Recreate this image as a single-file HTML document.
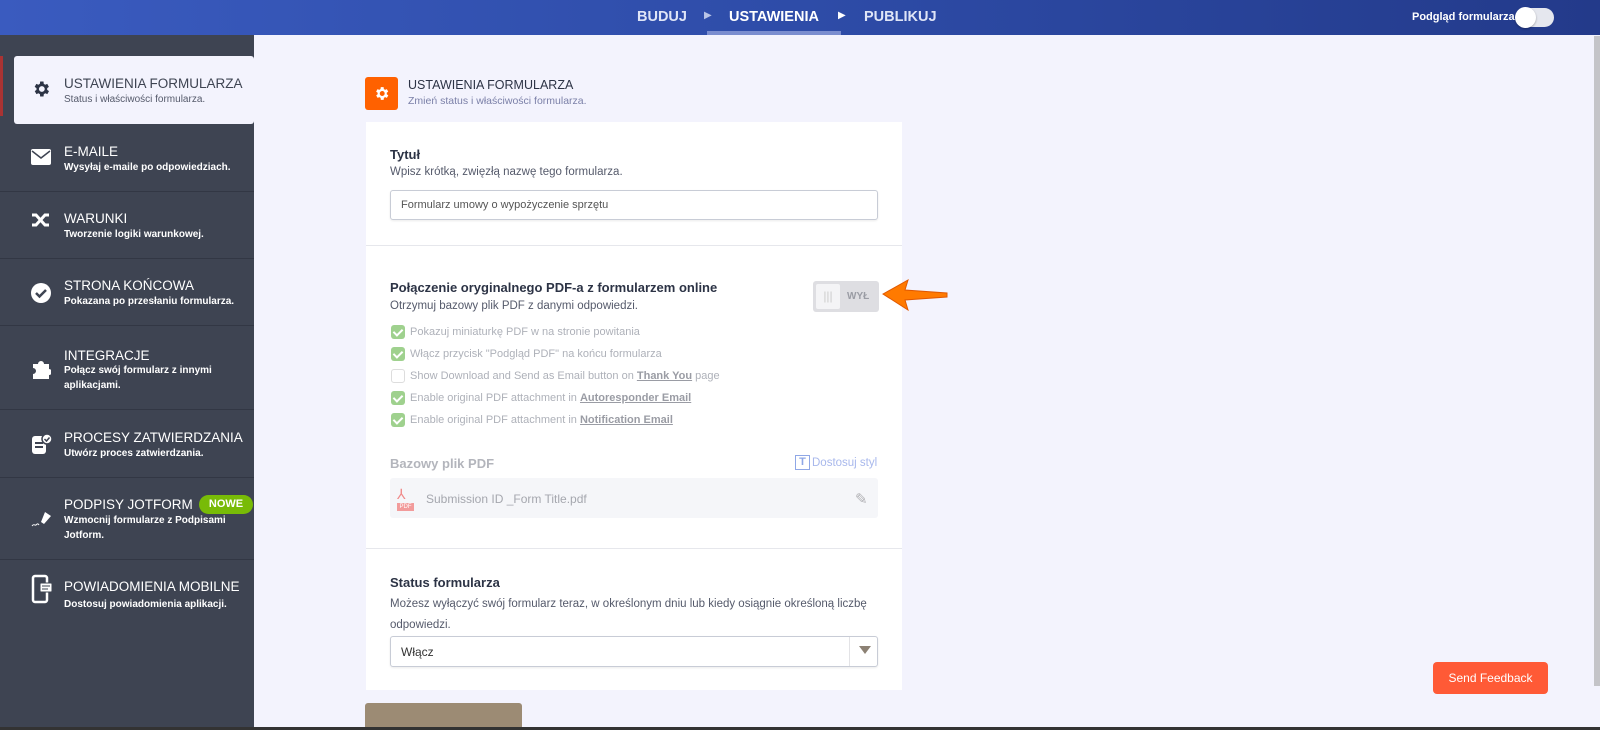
<!DOCTYPE html><html><head><meta charset="utf-8"><style>
*{margin:0;padding:0;box-sizing:border-box}
body{width:1600px;height:730px;overflow:hidden;background:#f3f3fd;font-family:"Liberation Sans",sans-serif;position:relative;color:#2c3345}
.a{position:absolute}
.top{left:0;top:0;width:1600px;height:35px;background:linear-gradient(90deg,#3a5bbf,#2e4ca8 50%,#233a8a)}
.nav{color:#dfe5f7;font-weight:bold;font-size:14.5px;top:9px}
.side{left:0;top:35px;width:254px;height:695px;background:#3e4452}
.it{left:0;width:254px;border-bottom:1px solid #323744;color:#fff}
.it .t{position:absolute;left:64px;font-size:13.5px;white-space:nowrap}
.it .s{position:absolute;left:64px;font-size:10px;font-weight:bold;line-height:15px;width:185px}
.it svg{position:absolute;left:31px}
.card{left:366px;width:536px;background:#fff}
.lbl{font-size:13px;font-weight:bold;color:#2c3345}
.sub{font-size:11.5px;color:#555a6b}
.inp{border:1px solid #c8ccd6;border-radius:3px;background:#fff;font-size:11px;color:#555;padding-left:10px;box-shadow:0 1px 2px rgba(0,0,0,.08)}
.cb{left:391px;width:14px;height:14px;border-radius:3px;background:#9fd18e}
.cb:after{content:"";position:absolute;left:4px;top:2px;width:4px;height:7px;border:solid #fff;border-width:0 2px 2px 0;transform:rotate(45deg)}
.ct{left:410px;font-size:11px;color:#aeb1b9}
.ct b{text-decoration:underline;color:#9a9ca4}
</style></head><body>
<div class="a top"></div>
<div class="a nav" style="left:637px">BUDUJ</div>
<div class="a" style="left:704px;top:10px;color:#b9c4e6;font-size:10px">▶</div>
<div class="a nav" style="left:729px;color:#fff">USTAWIENIA</div>
<div class="a" style="left:707px;top:31px;width:134px;height:4px;background:#7a8dcf"></div>
<div class="a" style="left:838px;top:10px;color:#fff;font-size:10px">▶</div>
<div class="a nav" style="left:864px">PUBLIKUJ</div>
<div class="a" style="left:1412px;top:11px;color:#fff;font-size:11px;font-weight:bold">Podgląd formularza</div>
<div class="a" style="left:1516px;top:8px;width:38px;height:19px;border-radius:10px;background:#e5e7ee"></div>
<div class="a" style="left:1515px;top:7px;width:21px;height:21px;border-radius:50%;background:#fff;box-shadow:0 1px 2px rgba(0,0,0,.3)"></div>
<div class="a" style="left:1594px;top:36px;width:6px;height:650px;background:#c4c4c8"></div>

<div class="a side"></div>
<div class="a" style="left:0;top:56px;width:3px;height:60px;background:#a33"></div>
<div class="a" style="left:14px;top:56px;width:240px;height:68px;background:#f3f3fd;border-radius:3px"></div>
<svg class="a" style="left:31px;top:79px" width="20" height="20" viewBox="0 0 24 24"><path fill="#2c3345" d="M19.4 13a7.5 7.5 0 000-2l2.1-1.6-2-3.5-2.5 1a7 7 0 00-1.7-1L15 3h-4l-.4 2.9a7 7 0 00-1.7 1l-2.5-1-2 3.5L6.6 11a7.5 7.5 0 000 2l-2.1 1.6 2 3.5 2.5-1a7 7 0 001.7 1L11 21h4l.4-2.9a7 7 0 001.7-1l2.5 1 2-3.5zM13 15.5a3.5 3.5 0 110-7 3.5 3.5 0 010 7z"/></svg>
<div class="a" style="left:64px;top:76px;font-size:13.5px;color:#3e4452">USTAWIENIA FORMULARZA</div>
<div class="a" style="left:64px;top:94px;font-size:10px;color:#555a6b">Status i właściwości formularza.</div>

<div class="a it" style="top:124px;height:68px"><svg style="top:25px" width="20" height="16" viewBox="0 0 20 16"><rect width="20" height="16" rx="2" fill="#fff"/><path d="M1 2l9 7 9-7" stroke="#3e4452" stroke-width="1.5" fill="none"/></svg><div class="t" style="top:20px">E-MAILE</div><div class="s" style="top:36px">Wysyłaj e-maile po odpowiedziach.</div></div>
<div class="a it" style="top:192px;height:67px"><svg style="top:19px" width="20" height="18" viewBox="0 0 20 18"><path d="M1 4h4l9 10h4M1 14h4l9-10h4" stroke="#fff" stroke-width="3" fill="none"/></svg><div class="t" style="top:19px">WARUNKI</div><div class="s" style="top:35px">Tworzenie logiki warunkowej.</div></div>
<div class="a it" style="top:259px;height:67px"><svg style="top:24px" width="20" height="20" viewBox="0 0 20 20"><circle cx="10" cy="10" r="10" fill="#fff"/><path d="M5 10l3.5 3.5L15 7" stroke="#3e4452" stroke-width="2.5" fill="none"/></svg><div class="t" style="top:19px">STRONA KOŃCOWA</div><div class="s" style="top:35px">Pokazana po przesłaniu formularza.</div></div>
<div class="a it" style="top:326px;height:84px"><svg style="top:33px" width="20" height="20" viewBox="0 0 20 20"><path fill="#fff" d="M2 5h5a3 3 0 116 0h5v5a3 3 0 110 6v4H2v-5a3 3 0 100-6z"/></svg><div class="t" style="top:22px">INTEGRACJE</div><div class="s" style="top:37px">Połącz swój formularz z innymi aplikacjami.</div></div>
<div class="a it" style="top:410px;height:68px"><svg style="top:23px" width="22" height="22" viewBox="0 0 22 22"><rect x="1" y="3" width="14" height="18" rx="3" fill="#fff"/><path d="M4 10h8M4 14h8" stroke="#3e4452" stroke-width="2"/><circle cx="16" cy="6" r="5" fill="#fff" stroke="#3e4452" stroke-width="1.5"/><path d="M13.5 6l2 2 3-3.5" stroke="#3e4452" stroke-width="1.5" fill="none"/></svg><div class="t" style="top:20px">PROCESY ZATWIERDZANIA</div><div class="s" style="top:36px">Utwórz proces zatwierdzania.</div></div>
<div class="a it" style="top:478px;height:82px"><svg style="top:32px" width="22" height="18" viewBox="0 0 22 18"><path fill="#fff" d="M10 12l4-10 6 4-7 8z"/><path d="M1 16c2-3 3 0 4-1s2-2 3 0" stroke="#fff" fill="none"/></svg><div class="t" style="top:19px">PODPISY JOTFORM</div><div class="s" style="top:35px">Wzmocnij formularze z Podpisami Jotform.</div><div style="position:absolute;left:199px;top:17px;width:54px;height:19px;border-radius:10px;background:#78bb07;color:#fff;font-size:11px;font-weight:bold;text-align:center;line-height:19px">NOWE</div></div>
<div class="a it" style="top:560px;height:100px;border:none"><svg style="top:14px" width="22" height="30" viewBox="0 0 22 30"><rect x="2" y="2" width="14" height="26" rx="2" fill="none" stroke="#fff" stroke-width="2.5"/><rect x="9" y="9" width="12" height="9" rx="1" fill="#fff" stroke="#3e4452"/><path d="M11 12h8M11 15h6" stroke="#3e4452"/></svg><div class="t" style="top:19px">POWIADOMIENIA MOBILNE</div><div class="s" style="top:37px">Dostosuj powiadomienia aplikacji.</div></div>

<div class="a" style="left:365px;top:77px;width:33px;height:33px;border-radius:3px;background:#ff6100"></div>
<svg class="a" style="left:373px;top:85px" width="17" height="17" viewBox="0 0 24 24"><path fill="#fff" d="M19.4 13a7.5 7.5 0 000-2l2.1-1.6-2-3.5-2.5 1a7 7 0 00-1.7-1L15 3h-4l-.4 2.9a7 7 0 00-1.7 1l-2.5-1-2 3.5L6.6 11a7.5 7.5 0 000 2l-2.1 1.6 2 3.5 2.5-1a7 7 0 001.7 1L11 21h4l.4-2.9a7 7 0 001.7-1l2.5 1 2-3.5zM13 15.5a3.5 3.5 0 110-7 3.5 3.5 0 010 7z"/></svg>
<div class="a" style="left:408px;top:78px;font-size:12.5px;color:#2c3345">USTAWIENIA FORMULARZA</div>
<div class="a" style="left:408px;top:95px;font-size:10.5px;color:#7b80a8">Zmień status i właściwości formularza.</div>

<div class="a card" style="top:122px;height:568px"></div>
<div class="a" style="left:366px;top:245px;width:536px;height:1px;background:#e6e7ec"></div>
<div class="a" style="left:366px;top:548px;width:536px;height:1px;background:#e6e7ec"></div>
<div class="a lbl" style="left:390px;top:147px">Tytuł</div>
<div class="a sub" style="left:390px;top:166px">Wpisz krótką, zwięzłą nazwę tego formularza.</div>
<div class="a inp" style="left:390px;top:190px;width:488px;height:30px;line-height:29px;color:#555">Formularz umowy o wypożyczenie sprzętu</div>

<div class="a lbl" style="left:390px;top:280px">Połączenie oryginalnego PDF-a z formularzem online</div>
<div class="a sub" style="left:390px;top:300px">Otrzymuj bazowy plik PDF z danymi odpowiedzi.</div>
<div class="a" style="left:813px;top:281px;width:66px;height:31px;border-radius:3px;background:#dedee2"></div>
<div class="a" style="left:816px;top:284px;width:24px;height:25px;border-radius:2px;background:#f4f4f6;color:#ccc;font-size:12px;text-align:center;line-height:25px">|||</div>
<div class="a" style="left:847px;top:291px;font-size:10px;font-weight:bold;color:#9a9ca4">WYŁ</div>
<svg class="a" style="left:880px;top:278px" width="70" height="34" viewBox="0 0 70 34"><path d="M3 16L28 2l-3 10 42 3v4l-42 3 3 10z" fill="#ff7a00" stroke="#e05800"/></svg>

<div class="a cb" style="top:325px"></div><div class="a ct" style="top:326px">Pokazuj miniaturkę PDF w na stronie powitania</div>
<div class="a cb" style="top:347px"></div><div class="a ct" style="top:348px">Włącz przycisk "Podgląd PDF" na końcu formularza</div>
<div class="a" style="left:391px;top:369px;width:14px;height:14px;border-radius:3px;border:1px solid #ddd"></div><div class="a ct" style="top:370px">Show Download and Send as Email button on <b>Thank You</b> page</div>
<div class="a cb" style="top:391px"></div><div class="a ct" style="top:392px">Enable original PDF attachment in <b>Autoresponder Email</b></div>
<div class="a cb" style="top:413px"></div><div class="a ct" style="top:414px">Enable original PDF attachment in <b>Notification Email</b></div>

<div class="a" style="left:390px;top:456px;font-size:13px;font-weight:bold;color:#b3b5bc">Bazowy plik PDF</div>
<div class="a" style="left:795px;top:455px;width:15px;height:15px;border:1.5px solid #8fa7e6;color:#8fa7e6;font-size:11px;font-weight:bold;text-align:center;line-height:13px">T</div>
<div class="a" style="left:812px;top:457px;font-size:11.5px;color:#a8b8ec">Dostosuj styl</div>
<div class="a" style="left:390px;top:478px;width:488px;height:40px;border-radius:3px;background:#f5f6f9"></div>
<div class="a" style="left:397px;top:486px;color:#f08a8a;font-size:14px">⅄</div>
<div class="a" style="left:397px;top:503px;width:17px;height:8px;background:#f29b9b;color:#fff;font-size:6px;text-align:center;line-height:8px">PDF</div>
<div class="a" style="left:426px;top:492px;font-size:12px;color:#a5a7ae">Submission ID _Form Title.pdf</div>
<div class="a" style="left:855px;top:490px;color:#b0b0b4;font-size:15px">✎</div>

<div class="a lbl" style="left:390px;top:575px">Status formularza</div>
<div class="a sub" style="left:390px;top:594px;width:495px;line-height:21px">Możesz wyłączyć swój formularz teraz, w określonym dniu lub kiedy osiągnie określoną liczbę odpowiedzi.</div>
<div class="a inp" style="left:390px;top:636px;width:488px;height:31px;line-height:30px;font-size:12px;color:#333">Włącz</div>
<div class="a" style="left:849px;top:637px;width:1px;height:29px;background:#e3e3e6"></div>
<div class="a" style="left:859px;top:646px;border:6px solid transparent;border-top:8px solid #8c8174;border-bottom:0"></div>

<div class="a" style="left:365px;top:703px;width:157px;height:27px;border-radius:3px 3px 0 0;background:#9c8b74"></div>
<div class="a" style="left:0;top:727px;width:1600px;height:3px;background:#333"></div>
<div class="a" style="left:1433px;top:662px;width:115px;height:32px;border-radius:4px;background:#ff5a36;color:#fff;font-size:12px;text-align:center;line-height:32px">Send Feedback</div>
</body></html>
